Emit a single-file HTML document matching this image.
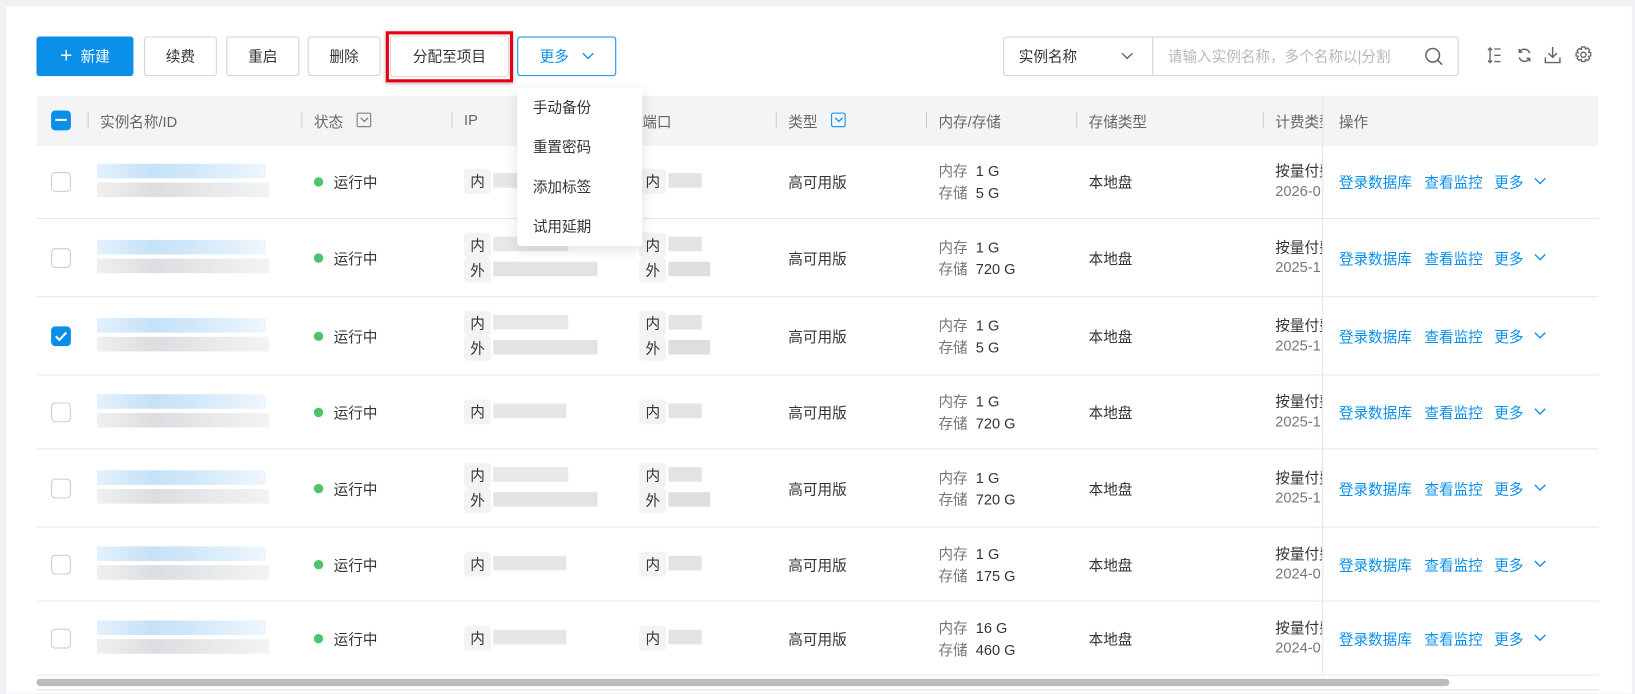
<!DOCTYPE html><html><head><meta charset="utf-8"><style>
*{box-sizing:border-box;margin:0;padding:0}
html,body{width:1635px;height:694px;overflow:hidden;background:#f0f2f5}
#w{position:absolute;left:0;top:0;width:1568px;height:665px;overflow:hidden;transform:scale(1.04273);transform-origin:0 0;font-family:"Liberation Sans","Noto Sans CJK SC",sans-serif;font-size:14px;color:#333}
.card{position:absolute;left:6px;top:6px;width:1559px;height:659px;background:#fff}
.a{position:absolute;white-space:nowrap}
.btn{position:absolute;top:35px;height:38px;border:1px solid #d0d3d8;border-radius:3px;background:#fff;display:flex;align-items:center;justify-content:center;font-size:14px;color:#333}
.hd{position:absolute;left:35px;top:92px;width:1498px;height:48px;background:#f3f4f6;border-radius:4px 4px 0 0}
.ht{position:absolute;top:107px;color:#666;font-size:14px}
.sep{position:absolute;top:107px;width:1px;height:16px;background:#ccc}
.row{position:absolute;left:35px;width:1498px;border-bottom:1px solid #e6e8eb}
.cb{position:absolute;left:49px;width:19px;height:19px;border:1px solid #ccc;border-radius:4px;background:#fff}
.bl{position:absolute;height:14px}
.dot{position:absolute;left:301px;width:9px;height:9px;border-radius:50%;background:#4cc46b}
.tag{position:absolute;width:26px;height:24px;background:#f2f3f5;border-radius:4px;text-align:center;line-height:24px;font-size:14px;color:#333}
.g{color:#777}
.lnk{color:#0a8fe8}
.m{position:absolute;left:496px;top:84px;width:120px;height:152px;background:#fff;box-shadow:0 3px 12px rgba(0,0,0,.12);border-radius:3px}
.m div{position:absolute;left:15px;font-size:14px;color:#333}
.shadow{position:absolute;left:1268px;top:92px;width:1px;height:556px;background:#e2e4e8;box-shadow:-3px 0 6px rgba(0,0,0,.06)}
</style></head><body><div id="w">
<div class="card"></div>
<div class="btn" style="left:35px;width:93px;background:#0a8fe8;border-color:#0a8fe8;color:#fff"><span style="font-size:20px;margin-right:8px;line-height:1">+</span>新建</div>
<div class="btn" style="left:138px;width:70px">续费</div>
<div class="btn" style="left:217px;width:70px">重启</div>
<div class="btn" style="left:295px;width:70px">删除</div>
<div class="a" style="left:370px;top:30px;width:122px;height:49px;border:3px solid #e60012;box-shadow:0 1px 4px rgba(0,0,0,.3)"></div>
<div class="btn" style="left:374px;width:114px;height:40px;top:34px">分配至项目</div>
<div class="btn" style="left:496px;width:95px;border-color:#0a8fe8;color:#0a8fe8">更多<svg width="12" height="8" style="margin-left:12px"><path d="M1 1l5 5 5-5" fill="none" stroke="#0a8fe8" stroke-width="1.3"/></svg></div>
<div class="a" style="left:962px;top:35px;width:437px;height:38px;border:1px solid #d0d3d8;border-radius:3px"></div>
<div class="a" style="left:1105px;top:36px;width:1px;height:36px;background:#d0d3d8"></div>
<div class="a" style="left:977px;top:44px">实例名称</div>
<svg class="a" style="left:1075px;top:50px" width="12" height="8"><path d="M1 1l5 5 5-5" fill="none" stroke="#666" stroke-width="1.3"/></svg>
<div class="a" style="left:1120px;top:44px;color:#b5b8bd">请输入实例名称，多个名称以|分割</div>
<svg class="a" style="left:1366px;top:45px" width="18" height="18"><circle cx="8" cy="8" r="6.5" fill="none" stroke="#666" stroke-width="1.5"/><path d="M13 13l4 4" stroke="#666" stroke-width="1.5"/></svg>
<svg class="a" style="left:1426px;top:45px" width="14" height="16"><path d="M3 1v14M1 3l2-2 2 2M1 13l2 2 2-2M7 2h6M7 8h6M7 14h6" fill="none" stroke="#666" stroke-width="1.3"/></svg>
<svg class="a" style="left:1454px;top:45px" width="16" height="16"><path d="M13 6A5.5 5.5 0 0 0 3 5M3 10a5.5 5.5 0 0 0 10 1M3 2v3h3M13 14v-3h-3" fill="none" stroke="#666" stroke-width="1.4"/></svg>
<svg class="a" style="left:1481px;top:44px" width="16" height="17"><path d="M8 1v10M4 7l4 4 4-4M1 11v5h14v-5" fill="none" stroke="#666" stroke-width="1.4"/></svg>
<svg class="a" style="left:1510px;top:44px" width="17" height="17"><circle cx="8.5" cy="8.5" r="2.5" fill="none" stroke="#666" stroke-width="1.3"/><path d="M7 1h3l.5 2 2-1 2 2-1 2 2 .5v3l-2 .5 1 2-2 2-2-1-.5 2H7l-.5-2-2 1-2-2 1-2-2-.5V7l2-.5-1-2 2-2 2 1z" fill="none" stroke="#666" stroke-width="1.3"/></svg>

<div class="hd"></div>
<div class="a" style="left:49px;top:106px;width:19px;height:19px;background:#0a8fe8;border-radius:4px"><div style="position:absolute;left:4px;top:8px;width:11px;height:2px;background:#fff"></div></div>
<div class="sep" style="left:84px"></div><div class="ht" style="left:96px">实例名称/ID</div>
<div class="sep" style="left:289px"></div><div class="ht" style="left:301px">状态</div>
<div class="a" style="left:342px;top:108px;width:14px;height:14px;border:1px solid #777;border-radius:2px"></div><svg class="a" style="left:345px;top:112px" width="9" height="6"><path d="M1 1l3.5 3.5L8 1" fill="none" stroke="#777" stroke-width="1.2"/></svg>
<div class="sep" style="left:433px"></div><div class="ht" style="left:445px">IP</div>
<div class="ht" style="left:616px">端口</div>
<div class="sep" style="left:744px"></div><div class="ht" style="left:756px">类型</div>
<div class="a" style="left:797px;top:108px;width:14px;height:14px;border:1px solid #0a8fe8;border-radius:2px"></div><svg class="a" style="left:800px;top:112px" width="9" height="6"><path d="M1 1l3.5 3.5L8 1" fill="none" stroke="#0a8fe8" stroke-width="1.2"/></svg>
<div class="sep" style="left:888px"></div><div class="ht" style="left:900px">内存/存储</div>
<div class="sep" style="left:1032px"></div><div class="ht" style="left:1044px">存储类型</div>
<div class="sep" style="left:1211px"></div><div class="ht" style="left:1223px">计费类型</div>
<div class="a" style="left:1269px;top:92px;width:264px;height:48px;background:#f3f4f6"></div>
<div class="ht" style="left:1284px">操作</div>

<div id="rows"></div>
<div class="shadow"></div>
<div class="a" style="left:35px;top:651px;width:1355px;height:7px;background:#bbbbc0;border-radius:4px"></div>
<div class="a" style="left:35px;top:661px;width:1498px;height:1px;background:#e0e2e6"></div>
<div class="m"><div style="top:9px">手动备份</div><div style="top:47px">重置密码</div><div style="top:85px">添加标签</div><div style="top:123px">试用延期</div></div>
</div>
<script>
var R=[[140,210,1,5,'1 G','5 G','2026-0'],[210,285,2,0,'1 G','720 G','2025-1'],[285,360,2,1,'1 G','5 G','2025-1'],[360,431,1,0,'1 G','720 G','2025-1'],[431,506,2,0,'1 G','720 G','2025-1'],[506,577,1,0,'1 G','175 G','2024-0'],[577,648,1,0,'16 G','460 G','2024-0']];
var h='';
R.forEach(function(r,i){var t=r[0],b=r[1],c=(t+b)/2-1;
h+='<div class="row" style="top:'+t+'px;height:'+(b-t)+'px"></div>';
if(i==2)h+='<div class="a" style="left:49px;top:'+(c-9)+'px;width:19px;height:19px;background:#0a8fe8;border-radius:4px"><svg width="19" height="19"><path d="M4.5 9.5l3.5 3.5 6.5-7" fill="none" stroke="#fff" stroke-width="2"/></svg></div>';
else h+='<div class="cb" style="top:'+(c-9)+'px"></div>';
h+='<div class="bl" style="left:93px;top:'+(c-17)+'px;width:162px;background:linear-gradient(90deg,#e4f1fc,#c5e1f7,#d8ebfa,#eef6fd)"></div>';
h+='<div class="bl" style="left:93px;top:'+(c+1)+'px;width:165px;background:linear-gradient(90deg,#f0f0f0,#dcdde0,#e8e9eb,#f3f3f3)"></div>';
h+='<div class="dot" style="top:'+(c-4)+'px"></div><div class="a" style="left:320px;top:'+(c-9)+'px">运行中</div>';
if(r[2]==1){h+='<div class="tag" style="left:445px;top:'+(c-12)+'px">内</div><div class="bl" style="left:473px;top:'+(c-8)+'px;width:70px;background:#e6e6e8"></div>';
h+='<div class="tag" style="left:613px;top:'+(c-12)+'px">内</div><div class="bl" style="left:641px;top:'+(c-8)+'px;width:32px;background:#e3e3e5"></div>';}
else{h+='<div class="tag" style="left:445px;top:'+(c-24)+'px">内</div><div class="bl" style="left:473px;top:'+(c-20)+'px;width:72px;background:#e8e8ea"></div>';
h+='<div class="tag" style="left:445px;top:'+(c)+'px">外</div><div class="bl" style="left:473px;top:'+(c+4)+'px;width:100px;background:#e3e3e5"></div>';
h+='<div class="tag" style="left:613px;top:'+(c-24)+'px">内</div><div class="bl" style="left:641px;top:'+(c-20)+'px;width:32px;background:#e3e3e5"></div>';
h+='<div class="tag" style="left:613px;top:'+(c)+'px">外</div><div class="bl" style="left:641px;top:'+(c+4)+'px;width:40px;background:#dededf"></div>';}
h+='<div class="a" style="left:756px;top:'+(c-9)+'px">高可用版</div>';
h+='<div class="a" style="left:900px;top:'+(c-20)+'px"><span class="g">内存</span>&nbsp; '+r[4]+'</div><div class="a" style="left:900px;top:'+(c+1)+'px"><span class="g">存储</span>&nbsp; '+r[5]+'</div>';
h+='<div class="a" style="left:1044px;top:'+(c-9)+'px">本地盘</div>';
h+='<div class="a" style="left:1223px;top:'+(c-20)+'px;width:45px;overflow:hidden">按量付费</div><div class="a g" style="left:1223px;top:'+(c+1)+'px;width:45px;overflow:hidden">'+r[6]+'</div>';
h+='<div class="a lnk" style="left:1284px;top:'+(c-9)+'px">登录数据库</div><div class="a lnk" style="left:1366px;top:'+(c-9)+'px">查看监控</div><div class="a lnk" style="left:1433px;top:'+(c-9)+'px">更多</div><svg class="a" style="left:1471px;top:'+(c-4)+'px" width="12" height="8"><path d="M1 1l5 5 5-5" fill="none" stroke="#0a8fe8" stroke-width="1.3"/></svg>';
});
document.getElementById('rows').innerHTML=h;
</script>
</body></html>
